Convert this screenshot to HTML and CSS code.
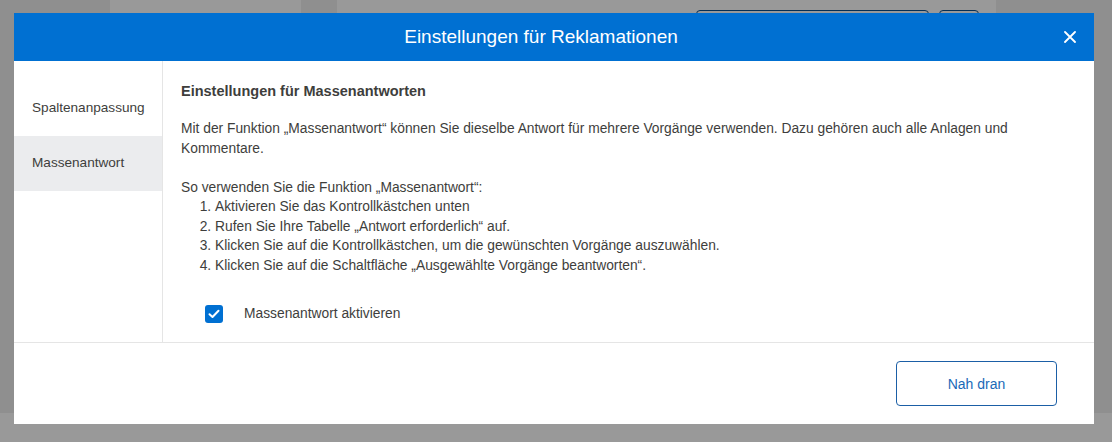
FILE: index.html
```html
<!DOCTYPE html>
<html lang="de">
<head>
    <meta charset="UTF-8">
    <meta name="viewport" content="width=device-width, initial-scale=1.0">
    <title>Einstellungen für Reklamationen</title>
    <link rel="stylesheet" href="styles.css">
</head>
<body>
    <!-- Seite hinter dem Dialog -->
    <div class="page">
        <div class="page-head">
            <div class="col col-grey col-a"></div>
            <div class="col col-white col-b"></div>
            <div class="col col-grey col-c"></div>
            <div class="col col-white col-d">
                <div class="search">
                    <span class="search-input"></span>
                    <span class="search-btn"></span>
                </div>
            </div>
            <div class="col col-grey col-e"></div>
        </div>
        <div class="page-foot"></div>
    </div>

    <div class="overlay">
        <div class="modal">
            <header class="modal-header">
                <h1>Einstellungen für Reklamationen</h1>
                <button class="close" title="Schließen">
                    <svg width="12" height="12" viewBox="0 0 12 12">
                        <path d="M1 1 L11 11 M11 1 L1 11" stroke="#fff" stroke-width="1.8" stroke-linecap="round"/>
                    </svg>
                </button>
            </header>

            <div class="modal-body">
                <!-- Navigation -->
                <ul class="sidebar">
                    <li>Spaltenanpassung</li>
                    <li class="active">Massenantwort</li>
                </ul>

                <!-- Inhalt -->
                <div class="content">
                    <h2>Einstellungen für Massenantworten</h2>
                    <p>Mit der Funktion „Massenantwort“ können Sie dieselbe Antwort für mehrere Vorgänge verwenden. Dazu gehören auch alle Anlagen und Kommentare.</p>
                    <p class="steps-title">So verwenden Sie die Funktion „Massenantwort“:</p>
                    <ol>
                        <li>Aktivieren Sie das Kontrollkästchen unten</li>
                        <li>Rufen Sie Ihre Tabelle „Antwort erforderlich“ auf.</li>
                        <li>Klicken Sie auf die Kontrollkästchen, um die gewünschten Vorgänge auszuwählen.</li>
                        <li>Klicken Sie auf die Schaltfläche „Ausgewählte Vorgänge beantworten“.</li>
                    </ol>
                    <label class="check">
                        <span class="box">
                            <svg width="12" height="10" viewBox="0 0 12 10">
                                <path d="M1.5 5.2 L4.5 8 L10.5 1.8" fill="none" stroke="#fff" stroke-width="2" stroke-linecap="round" stroke-linejoin="round"/>
                            </svg>
                        </span>
                        Massenantwort aktivieren
                    </label>
                </div>
            </div>

            <footer class="modal-footer">
                <button class="btn">Nah dran</button>
            </footer>
        </div>
    </div>
</body>
</html>
```

FILE: styles.css
```css
body {
    margin: 0;
    font-family: 'Liberation Sans', Arial, sans-serif;
    color: #3e3e3c;
    background-color: #eeeeee;
    height: 442px;
    overflow: hidden;
}
.page {
    display: flex;
    flex-direction: column;
    height: 442px;
}
.page-head {
    display: flex;
    height: 413px;
}
.col-grey {
    background-color: #eeeeee;
}
.col-white {
    background-color: #ffffff;
}
.col-a { width: 110px; }
.col-b { width: 191px; }
.col-c { width: 36px; }
.col-d { width: 659px; }
.col-e { flex: 1; }
.page-foot {
    flex: 1;
    background-color: #ffffff;
}
.search {
    display: flex;
    gap: 10px;
    padding: 10px 0 0 359px;
}
.search-input, .search-btn {
    height: 30px;
    border: 1px solid #0b4f8c;
    border-radius: 4px;
}
.search-input { width: 231px; }
.search-btn { width: 38px; }

.overlay {
    position: fixed;
    inset: 0;
    background-color: rgba(0, 0, 0, 0.4);
    padding: 13px 0 0 14px;
}
.modal {
    width: 1080px;
    background-color: #fff;
}
.modal-header {
    display: flex;
    align-items: center;
    height: 48px;
    background-color: #0070d2;
}
.modal-header h1 {
    flex: 1;
    margin: 0 0 0 4px;
    text-align: center;
    font-size: 19px;
    font-weight: normal;
    color: #fff;
}
.close {
    background: none;
    border: none;
    padding: 0;
    width: 12px;
    height: 12px;
    margin-right: 18px;
    cursor: pointer;
    display: flex;
}
.modal-body {
    display: flex;
    border-bottom: 1px solid #e5e5e5;
}
.sidebar {
    list-style: none;
    margin: 0;
    padding: 20px 0 0;
    width: 148px;
    border-right: 1px solid #e5e5e5;
}
.sidebar li {
    height: 55px;
    line-height: 54px;
    padding-left: 18px;
    font-size: 13.6px;
}
.sidebar li.active {
    background-color: #ebecee;
}
.content {
    flex: 1;
    padding: 20px 44px 19px 18px;
    font-size: 13.8px;
    line-height: 19.5px;
}
.content h2 {
    margin: 0 0 18px;
    font-size: 14.5px;
    line-height: 20px;
    font-weight: bold;
}
.content p {
    margin: 0 0 19.5px;
}
.content p.steps-title {
    margin: 0;
}
.content ol {
    margin: 0;
    padding-left: 34px;
}
.check {
    display: flex;
    align-items: center;
    gap: 21px;
    margin: 30px 0 0 24px;
    line-height: 18px;
}
.box {
    width: 18px;
    height: 18px;
    border-radius: 3px;
    background-color: #0070d2;
    display: flex;
    align-items: center;
    justify-content: center;
}
.modal-footer {
    display: flex;
    justify-content: flex-end;
    padding: 18px 37px 18px 0;
}
.btn {
    width: 161px;
    height: 45px;
    background-color: #fff;
    border: 1px solid #1b5fa6;
    border-radius: 4px;
    color: #1a69b8;
    font-family: 'Liberation Sans', Arial, sans-serif;
    font-size: 14px;
    cursor: pointer;
}
```
